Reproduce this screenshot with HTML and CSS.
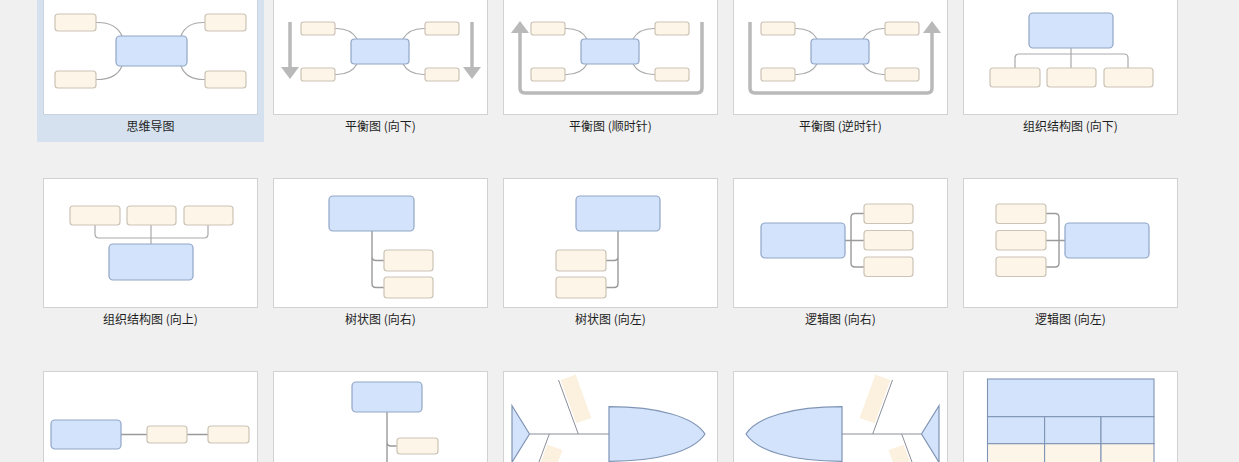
FILE: index.html
```html
<!DOCTYPE html>
<html lang="zh-CN">
<head>
<meta charset="utf-8">
<title>结构</title>
<link rel="stylesheet" href="styles.css">
</head>
<body>
<div class="viewport">
  <div class="grid">

    <div class="item selected">
      <div class="card">
        <svg viewBox="0 0 213 128">
          <path class="ln" d="M52 36.5 Q72 36 78 50 M52 93.5 Q72 94 78 80 M161 36.5 Q142 36 137 50 M161 93.5 Q142 94 137 80"/>
          <rect class="o" x="11" y="28" width="41" height="17" rx="3"/>
          <rect class="o" x="11" y="85" width="41" height="17" rx="3"/>
          <rect class="o" x="161" y="28" width="41" height="17" rx="3"/>
          <rect class="o" x="161" y="85" width="41" height="17" rx="3"/>
          <rect class="b" x="72" y="50" width="71" height="30" rx="4"/>
        </svg>
      </div>
      <div class="label">思维导图</div>
    </div>

    <div class="item">
      <div class="card">
        <svg viewBox="0 0 213 128">
          <path class="ar" d="M16 36 V82 M198 36 V82"/>
          <polygon class="arh" points="7,81 25,81 16,93"/>
          <polygon class="arh" points="189,81 207,81 198,93"/>
          <path class="ln" d="M61 42.5 Q77 42 83 53 M61 88.5 Q77 89 83 78 M151 42.5 Q135 42 129 53 M151 88.5 Q135 89 129 78"/>
          <rect class="o" x="27" y="36" width="34" height="13" rx="2.5"/>
          <rect class="o" x="27" y="82" width="34" height="13" rx="2.5"/>
          <rect class="o" x="151" y="36" width="34" height="13" rx="2.5"/>
          <rect class="o" x="151" y="82" width="34" height="13" rx="2.5"/>
          <rect class="b" x="77" y="53" width="58" height="25" rx="3.5"/>
        </svg>
      </div>
      <div class="label">平衡图 (向下)</div>
    </div>

    <div class="item">
      <div class="card">
        <svg viewBox="0 0 213 128">
          <path class="ar" d="M198 36 V102 Q198 107 193 107 H21 Q16 107 16 102 V46"/>
          <polygon class="arh" points="7,47 25,47 16,35"/>
          <path class="ln" d="M61 42.5 Q77 42 83 53 M61 88.5 Q77 89 83 78 M151 42.5 Q135 42 129 53 M151 88.5 Q135 89 129 78"/>
          <rect class="o" x="27" y="36" width="34" height="13" rx="2.5"/>
          <rect class="o" x="27" y="82" width="34" height="13" rx="2.5"/>
          <rect class="o" x="151" y="36" width="34" height="13" rx="2.5"/>
          <rect class="o" x="151" y="82" width="34" height="13" rx="2.5"/>
          <rect class="b" x="77" y="53" width="58" height="25" rx="3.5"/>
        </svg>
      </div>
      <div class="label">平衡图 (顺时针)</div>
    </div>

    <div class="item">
      <div class="card">
        <svg viewBox="0 0 213 128">
          <path class="ar" d="M16 36 V102 Q16 107 21 107 H193 Q198 107 198 102 V46"/>
          <polygon class="arh" points="189,47 207,47 198,35"/>
          <path class="ln" d="M61 42.5 Q77 42 83 53 M61 88.5 Q77 89 83 78 M151 42.5 Q135 42 129 53 M151 88.5 Q135 89 129 78"/>
          <rect class="o" x="27" y="36" width="34" height="13" rx="2.5"/>
          <rect class="o" x="27" y="82" width="34" height="13" rx="2.5"/>
          <rect class="o" x="151" y="36" width="34" height="13" rx="2.5"/>
          <rect class="o" x="151" y="82" width="34" height="13" rx="2.5"/>
          <rect class="b" x="77" y="53" width="58" height="25" rx="3.5"/>
        </svg>
      </div>
      <div class="label">平衡图 (逆时针)</div>
    </div>

    <div class="item">
      <div class="card">
        <svg viewBox="0 0 213 128">
          <path class="ln" d="M107 62 V82 M51 82 V72 Q51 68 55 68 H160 Q164 68 164 72 V82"/>
          <rect class="b" x="65" y="27" width="84" height="35" rx="4"/>
          <rect class="o" x="26" y="82" width="50" height="19" rx="3"/>
          <rect class="o" x="83" y="82" width="49" height="19" rx="3"/>
          <rect class="o" x="140" y="82" width="49" height="19" rx="3"/>
        </svg>
      </div>
      <div class="label">组织结构图 (向下)</div>
    </div>

    <div class="item">
      <div class="card">
        <svg viewBox="0 0 213 128">
          <path class="ln" d="M107 46 V65 M51 46 V55 Q51 59 55 59 H160 Q164 59 164 55 V46"/>
          <rect class="o" x="26" y="27" width="50" height="19" rx="3"/>
          <rect class="o" x="83" y="27" width="49" height="19" rx="3"/>
          <rect class="o" x="140" y="27" width="49" height="19" rx="3"/>
          <rect class="b" x="65" y="65" width="84" height="36" rx="4"/>
        </svg>
      </div>
      <div class="label">组织结构图 (向上)</div>
    </div>

    <div class="item">
      <div class="card">
        <svg viewBox="0 0 213 128">
          <path class="ln dk" d="M98 52 V104.5 Q98 108.5 102 108.5 H110 M98 77.5 Q98 81.5 102 81.5 H110"/>
          <rect class="b" x="55" y="17" width="85" height="35" rx="4"/>
          <rect class="o" x="110" y="71" width="49" height="21" rx="3"/>
          <rect class="o" x="110" y="98" width="49" height="21" rx="3"/>
        </svg>
      </div>
      <div class="label">树状图 (向右)</div>
    </div>

    <div class="item">
      <div class="card">
        <svg viewBox="0 0 213 128">
          <path class="ln dk" d="M114 52 V104.5 Q114 108.5 110 108.5 H102 M114 77.5 Q114 81.5 110 81.5 H102"/>
          <rect class="b" x="72" y="17" width="84" height="35" rx="4"/>
          <rect class="o" x="52" y="71" width="50" height="21" rx="3"/>
          <rect class="o" x="52" y="98" width="50" height="21" rx="3"/>
        </svg>
      </div>
      <div class="label">树状图 (向左)</div>
    </div>

    <div class="item">
      <div class="card">
        <svg viewBox="0 0 213 128">
          <path class="ln dk" d="M130 34.5 H121 Q117 34.5 117 38.5 V84 Q117 88 121 88 H130 M111 61.5 H130"/>
          <rect class="b" x="27" y="44" width="84" height="35" rx="4"/>
          <rect class="o" x="130" y="25" width="49" height="19.5" rx="3"/>
          <rect class="o" x="130" y="51.5" width="49" height="19.5" rx="3"/>
          <rect class="o" x="130" y="78" width="49" height="19.5" rx="3"/>
        </svg>
      </div>
      <div class="label">逻辑图 (向右)</div>
    </div>

    <div class="item">
      <div class="card">
        <svg viewBox="0 0 213 128">
          <path class="ln dk" d="M82 34.5 H91 Q95 34.5 95 38.5 V84 Q95 88 91 88 H82 M82 61.5 H101"/>
          <rect class="o" x="32" y="25" width="50" height="19.5" rx="3"/>
          <rect class="o" x="32" y="51.5" width="50" height="19.5" rx="3"/>
          <rect class="o" x="32" y="78" width="50" height="19.5" rx="3"/>
          <rect class="b" x="101" y="44" width="84" height="35" rx="4"/>
        </svg>
      </div>
      <div class="label">逻辑图 (向左)</div>
    </div>

    <div class="item">
      <div class="card">
        <svg viewBox="0 0 213 128">
          <path class="ln dk" d="M77 62.5 H103 M143 62.5 H164"/>
          <rect class="b" x="7" y="48" width="70" height="29" rx="4"/>
          <rect class="o" x="103" y="54" width="40" height="17" rx="3"/>
          <rect class="o" x="164" y="54" width="41" height="17" rx="3"/>
        </svg>
      </div>
    </div>

    <div class="item">
      <div class="card">
        <svg viewBox="0 0 213 128">
          <path class="ln dk" d="M113 40 V128 M113 70 Q113 74 117 74 H123 M113 98 Q113 102 117 102 H123"/>
          <rect class="b" x="78" y="10" width="70" height="30" rx="4"/>
          <rect class="o" x="123" y="66" width="41" height="16" rx="3"/>
          <rect class="o" x="123" y="94" width="41" height="16" rx="3"/>
        </svg>
      </div>
    </div>

    <div class="item">
      <div class="card">
        <svg viewBox="0 0 213 128">
          <rect class="bz" x="64" y="4" width="16" height="46" transform="rotate(-20 72 27)"/>
          <rect class="bz" x="35" y="74" width="16" height="46" transform="rotate(20 43 97)"/>
          <path class="fl" d="M74.3 62 L54.5 8 M45.3 62 L25.5 116 M25.5 62 H105"/>
          <polygon class="fb" points="8,33.7 25.5,62 8,90.3"/>
          <path class="fb" d="M105 34.7 C155 34.7 190 45 201 62 C190 79 155 89.3 105 89.3 Z"/>
        </svg>
      </div>
    </div>

    <div class="item">
      <div class="card">
        <svg viewBox="0 0 213 128">
          <g transform="translate(213 0) scale(-1 1)">
            <rect class="bz" x="64" y="4" width="16" height="46" transform="rotate(-20 72 27)"/>
            <rect class="bz" x="35" y="74" width="16" height="46" transform="rotate(20 43 97)"/>
            <path class="fl" d="M74.3 62 L54.5 8 M45.3 62 L25.5 116 M25.5 62 H105"/>
            <polygon class="fb" points="8,33.7 25.5,62 8,90.3"/>
            <path class="fb" d="M105 34.7 C155 34.7 190 45 201 62 C190 79 155 89.3 105 89.3 Z"/>
          </g>
        </svg>
      </div>
    </div>

    <div class="item">
      <div class="card">
        <svg viewBox="0 0 213 128">
          <rect class="tb" x="23.5" y="7" width="166.5" height="37.7"/>
          <rect class="tb" x="23.5" y="44.7" width="57.1" height="27"/>
          <rect class="tb" x="80.6" y="44.7" width="56.4" height="27"/>
          <rect class="tb" x="137" y="44.7" width="53" height="27"/>
          <rect class="to" x="23.5" y="71.7" width="57.1" height="27"/>
          <rect class="to" x="80.6" y="71.7" width="56.4" height="27"/>
          <rect class="to" x="137" y="71.7" width="53" height="27"/>
          <rect class="to" x="23.5" y="98.7" width="57.1" height="27"/>
          <rect class="to" x="80.6" y="98.7" width="56.4" height="27"/>
          <rect class="to" x="137" y="98.7" width="53" height="27"/>
        </svg>
      </div>
    </div>

  </div>
</div>
</body>
</html>
```

FILE: styles.css
```css
html, body {
  margin: 0;
  padding: 0;
  background: #f0f0f0;
}

body {
  font-family: "Noto Sans CJK SC", "Noto Sans", sans-serif;
  color: #1e1e1e;
}

.viewport {
  height: 462px;
  overflow: hidden;
}

.grid {
  display: grid;
  grid-template-columns: repeat(5, 227px);
  column-gap: 3px;
  row-gap: 30px;
  padding-left: 37px;
  margin-top: -21px;
}

.item {
  padding: 6px 6px 8px;
}

.item.selected {
  background: #d5e1ee;
}

.card {
  width: 215px;
  height: 130px;
  box-sizing: border-box;
  border: 1px solid #d2d2d2;
  background: #ffffff;
}

.item.selected .card {
  border-color: #c8d3df;
}

.card svg {
  display: block;
  width: 213px;
  height: 128px;
}

.label {
  margin-top: 3px;
  line-height: 16px;
  font-size: 12px;
  text-align: center;
  white-space: nowrap;
}

/* diagram primitives */
.b {
  fill: #d3e3fb;
  stroke: #90a6c6;
  stroke-width: 1.2;
}

.o {
  fill: #fdf5e8;
  stroke: #cbc3b6;
  stroke-width: 1.2;
}

.ln {
  fill: none;
  stroke: #a9a9a9;
  stroke-width: 1.2;
}

.ln.dk {
  stroke: #9a9a9a;
  stroke-width: 1.4;
}

.ar {
  fill: none;
  stroke: #b9b9b9;
  stroke-width: 3.5;
}

.arh {
  fill: #b9b9b9;
}

.bz {
  fill: #fcf0de;
}

.fl {
  fill: none;
  stroke: #8a8f98;
  stroke-width: 1;
}

.fb {
  fill: #d3e3fb;
  stroke: #7f94b5;
  stroke-width: 1.2;
}

.tb {
  fill: #d3e3fb;
  stroke: #7f94b5;
  stroke-width: 1.1;
}

.to {
  fill: #fdf5e8;
  stroke: #7f94b5;
  stroke-width: 1.1;
}
```
